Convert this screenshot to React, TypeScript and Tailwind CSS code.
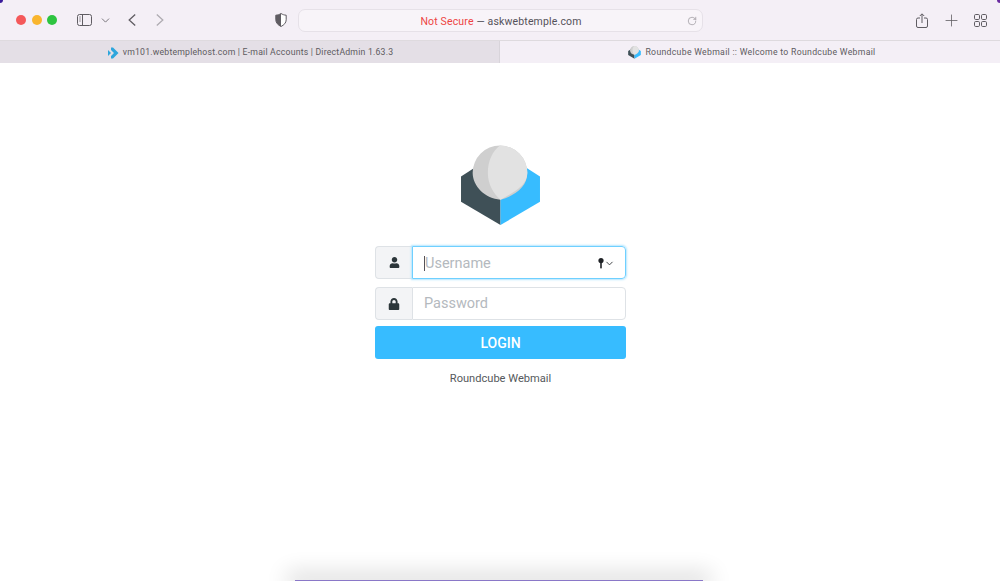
import { ChevronDown, Plus, RotateCw } from "lucide-react";
import { FaLock, FaUser } from "react-icons/fa";

const sans = "font-['Roboto','Liberation_Sans',sans-serif]";

function SidebarIcon() {
  return (
    <svg width="15" height="12" viewBox="0 0 15 12" fill="none" stroke="#5f5c62" strokeWidth="1">
      <rect x="0.5" y="0.5" width="14" height="11" rx="2" />
      <path d="M5.5 0.5v11" />
      <path d="M2 3h2M2 5h2M2 7h2" stroke="#9a979d" />
    </svg>
  );
}

function ArrowIcon({ dir, color }: { dir: "back" | "forward"; color: string }) {
  return (
    <svg width="8" height="12" viewBox="0 0 8 12" fill="none" stroke={color} strokeWidth="1.300">
      <path d={dir === "back" ? "M7.200 .6 1.200 6l6 5.400" : "M.8 .6l6 5.400-6 5.400"} />
    </svg>
  );
}

function ShieldIcon() {
  return (
    <svg width="12" height="14" viewBox="0 0 12 14">
      <path d="M6 .5C4.4 1.6 2.6 2.1.8 2.2v4.6c0 3 2.2 5.2 5.2 6.7 3-1.500 5.200-3.700 5.200-6.700V2.200C9.400 2.100 7.600 1.600 6 .5z" fill="#fff" stroke="#5f5c62" />
      <path d="M6 .5C4.400 1.600 2.600 2.100.8 2.200v4.600c0 3 2.200 5.200 5.200 6.700z" fill="#5f5c62" />
    </svg>
  );
}

function ShareIcon() {
  return (
    <svg width="12" height="15" viewBox="0 0 12 15" fill="none" stroke="#5f5c62" strokeWidth="1">
      <path d="M4 5H2a1.500 1.500 0 0 0-1.500 1.500v6.500A1.500 1.500 0 0 0 2 14.500h8a1.500 1.500 0 0 0 1.500-1.500V6.500A1.500 1.500 0 0 0 10 5H8" />
      <path d="M6 10V1M3.800 3 6 .8 8.200 3" />
    </svg>
  );
}

function TabsIcon() {
  return (
    <svg width="13" height="13" viewBox="0 0 13 13" fill="none" stroke="#5f5c62" strokeWidth="1">
      <rect x="0.5" y="0.5" width="5" height="5" rx="1.200" />
      <rect x="7.500" y="0.5" width="5" height="5" rx="1.200" />
      <rect x="0.5" y="7.500" width="5" height="5" rx="1.200" />
      <rect x="7.500" y="7.500" width="5" height="5" rx="1.200" />
    </svg>
  );
}

function DirectAdminIcon() {
  return (
    <svg width="11" height="12" viewBox="0 0 11 12">
      <path d="M3 0.500 L5 0.500 L10.500 6 L5 11.500 L3 11.500 L3 9 L6 6 L3 3 Z" fill="#2ea6dc" />
      <path d="M0 3 L3 6 L0 9 Z" fill="#2ea6dc" />
    </svg>
  );
}

function CubeIcon({ size }: { size: number }) {
  return (
    <svg width={size} height={size} viewBox="0 0 80 80">
      <path d="M1 31 L40 6 L40 79 L1 56 Z" fill="#3f5057" />
      <path d="M79 31 L40 6 L40 79 L79 56 Z" fill="#37bcff" />
      <path d="M40 54 C25 53 12.500 41 12.500 27.500 A27 27 0 0 1 66.500 27.500 C66.500 41 55 50 40 54 Z" fill="#cfcfcf" />
      <path d="M40 54 C33 48 27.500 39 27.500 27.500 C27.500 16 32 6 39.500 .5 A27 27 0 0 1 66.500 27.500 C66.500 41 52 47 40 54 Z" fill="#e2e2e2" />
    </svg>
  );
}

function KeyIcon() {
  return (
    <svg width="6" height="11" viewBox="0 0 6 11" fill="#1f2226">
      <circle cx="3" cy="2.600" r="2.600" />
      <path d="M2.200 4h1.600v5.500L3 11l-.8-1.500z" />
    </svg>
  );
}

function Toolbar() {
  return (
    <div className="h-10 flex items-center bg-[#f4eff6] pl-[16px] pr-[13px]">
      <div className="flex items-center gap-[5.500px]">
        <span className="w-[10px] h-[10px] rounded-full bg-[#f4585a]" />
        <span className="w-[10px] h-[10px] rounded-full bg-[#f9b52e]" />
        <span className="w-[10px] h-[10px] rounded-full bg-[#2dc440]" />
      </div>
      <div className="ml-[20px] flex items-center">
        <SidebarIcon />
        <ChevronDown size={13} strokeWidth={1.800} className="ml-[7px] text-[#77747a]" />
      </div>
      <div className="ml-[16px]">
        <ArrowIcon dir="back" color="#5f5c62" />
      </div>
      <div className="ml-[20px]">
        <ArrowIcon dir="forward" color="#aeabb1" />
      </div>
      <div className="ml-[111px]">
        <ShieldIcon />
      </div>
      <div className="ml-[11px] mt-px w-[405px] h-[23px] flex items-center rounded-[7px] border border-[#e6e1e8] bg-[#f8f4f9] pr-[5px] pl-[16px]">
        <span className={`flex-1 pt-[2px] text-center text-[10.500px] text-[#55525a] ${sans} tracking-[0.16px]`}>
          <span className="text-[#ee4444]">Not Secure</span> — askwebtemple.com
        </span>
        <RotateCw size={10} strokeWidth={1.500} className="text-[#8b888e]" />
      </div>
      <div className="ml-auto flex items-center gap-[13.500px]">
        <ShareIcon />
        <Plus size={19} strokeWidth={1} className="text-[#5f5c62]" />
        <TabsIcon />
      </div>
    </div>
  );
}

function TabBar() {
  return (
    <div className={`h-[23px] grid grid-cols-2 border-t border-[#dedade] bg-[#f4eff6] text-[8.700px] text-[#5d5a60] ${sans}`}>
      <div className="flex items-center justify-center gap-[4px] pt-px pl-[2px] bg-[#e4dfe6] border-r border-[#d8d4da] tracking-[0.21px]">
        <DirectAdminIcon />
        <span>vm101.webtemplehost.com | E-mail Accounts | DirectAdmin 1.63.3</span>
      </div>
      <div className="flex items-center justify-center gap-[4px] pt-px pl-[4px] tracking-[0.3px]">
        <CubeIcon size={13} />
        <span>Roundcube Webmail :: Welcome to Roundcube Webmail</span>
      </div>
    </div>
  );
}

function LoginForm() {
  return (
    <main className={`flex-1 bg-white flex flex-col items-center pt-[82px] pl-px ${sans}`}>
      <CubeIcon size={81} />
      <form className="w-[251px] mt-[20px] flex flex-col">
        <div className="flex h-[33px]">
          <div className="w-[37px] flex items-center justify-center bg-[#f3f4f6] border border-[#dee2e6] border-r-0 rounded-l-[4px]">
            <FaUser size={11} className="text-[#2c363a]" />
          </div>
          <div className="flex-1 flex items-center pl-[11px] pr-[10px] pt-[2px] border border-[#6fd0ff] rounded-r-[4px] shadow-[0_0_2px_1px_#b5e6ff]">
            <span className="w-px h-[15px] bg-[#55525a]" />
            <span className="text-[14.500px] text-[#b4b9be]">Username</span>
            <span className="ml-auto flex items-center gap-0">
              <KeyIcon />
              <ChevronDown size={11} strokeWidth={2} className="text-[#33373a]" />
            </span>
          </div>
        </div>
        <div className="flex h-[33px] mt-[8px]">
          <div className="w-[37px] flex items-center justify-center bg-[#f3f4f6] border border-[#dee2e6] border-r-0 rounded-l-[4px]">
            <FaLock size={12} className="text-[#2c363a]" />
          </div>
          <div className="flex-1 flex items-center pl-[11px] pt-px border border-[#dee2e6] rounded-r-[4px]">
            <span className="text-[14.500px] text-[#b4b9be]">Password</span>
          </div>
        </div>
        <button type="button" className="h-[33px] mt-[6px] pt-px rounded-[3px] bg-[#37bcff] text-white text-[14px] font-medium">
          LOGIN
        </button>
      </form>
      <p className="mt-[12px] text-[11.100px] text-[#55595c]">Roundcube Webmail</p>
    </main>
  );
}

export default function App() {
  return (
    <div className="relative h-[581px] overflow-hidden flex flex-col bg-white">
      <Toolbar />
      <TabBar />
      <LoginForm />
      {/* window corners and the dock peeking in at the bottom */}
      <div className="absolute left-0 top-0 w-[3px] h-[3px] bg-[#3a1a9a] rounded-br-[3px]" />
      <div className="absolute right-0 top-0 w-[3px] h-[3px] bg-[#6a2aa0] rounded-bl-[3px]" />
      <div className="absolute left-[295px] bottom-0 w-[408px] h-px bg-[#8a78c8] shadow-[0_0_22px_8px_rgba(0,0,0,0.14)]" />
    </div>
  );
}
